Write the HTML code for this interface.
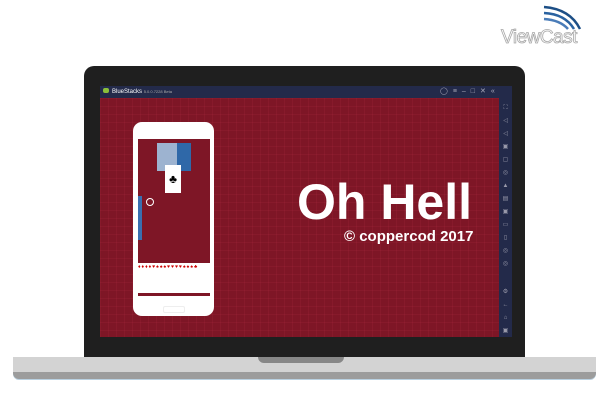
<!DOCTYPE html>
<html><head><style>
body{margin:0;width:602px;height:414px;background:#fff;position:relative;overflow:hidden;font-family:"Liberation Sans",sans-serif}
.a{position:absolute}
</style></head><body>
<svg class="a" style="left:540px;top:3px" width="45" height="28" viewBox="0 0 45 28">
<path d="M4 4 Q30 6 40 26" stroke="#1d4f86" stroke-width="2.5" fill="none"/>
<path d="M4 10 Q25 11 34 26" stroke="#2a62a0" stroke-width="2.5" fill="none"/>
<path d="M4 16 Q20 17 28 26" stroke="#4a7cb8" stroke-width="2.5" fill="none"/>
</svg>
<div class="a" style="left:501px;top:27px;font-size:19px;color:#fff;-webkit-text-stroke:0.8px #a8a8a8;letter-spacing:-0.5px">ViewCast</div>
<div class="a" style="left:84px;top:66px;width:441px;height:294px;background:#1f1f1f;border-radius:10px 10px 0 0"></div>
<div class="a" style="left:13px;top:357px;width:583px;height:22px;background:#9c9c9c;border-radius:0 0 6px 6px;box-shadow:0 1px 0 #b9d0e0"></div>
<div class="a" style="left:13px;top:357px;width:583px;height:15px;background:#d3d3d3"></div>
<div class="a" style="left:258px;top:357px;width:86px;height:6px;background:#878787;border-radius:0 0 6px 6px"></div>
<div class="a" style="left:100px;top:86px;width:412px;height:12px;background:#232a4a"></div>
<div class="a" style="left:103px;top:88px;width:6px;height:5px;background:#8bbf3a;border-radius:2px"></div>
<div class="a" style="left:112px;top:87px;font-size:6px;color:#fff;line-height:10px">BlueStacks <span style="font-size:4px;color:#aaa">5.0.0.7228 Beta</span></div>
<div class="a" style="left:440px;top:87px;font-size:7px;color:#aab;line-height:10px;letter-spacing:5px">◯≡–□✕«</div>
<div class="a" style="left:100px;top:98px;width:399px;height:239px;background:#7e1626;background-image:linear-gradient(rgba(255,80,110,.07) 1px,transparent 1px),linear-gradient(90deg,rgba(255,80,110,.07) 1px,transparent 1px);background-size:8px 8px"></div>
<div class="a" style="left:499px;top:98px;width:13px;height:239px;background:#232a4a"></div>
<div class="a" style="left:502px;top:102px;width:7px;font-size:6px;color:#99a;line-height:13px;text-align:center">⛶<br>◁<br>◁<br>▣<br>▢<br>◎<br>▲<br>▤<br>▣<br>▭<br>▯<br>◎<br>◎</div>
<div class="a" style="left:502px;top:286px;width:7px;font-size:6px;color:#99a;line-height:13px;text-align:center">⚙<br>←<br>⌂<br>▣</div>
<div class="a" style="left:133px;top:122px;width:81px;height:194px;background:#fff;border-radius:9px"></div>
<div class="a" style="left:138px;top:139px;width:72px;height:157px;background:#7e1626"></div>
<div class="a" style="left:157px;top:143px;width:34px;height:28px;background:#9db3d0"></div>
<div class="a" style="left:177px;top:143px;width:14px;height:28px;background:#2f68a8"></div>
<div class="a" style="left:165px;top:165px;width:16px;height:28px;background:#fff;font-size:12px;text-align:center;line-height:28px">♣</div>
<div class="a" style="left:138px;top:196px;width:4px;height:44px;background:#3a6fb0"></div>
<div class="a" style="left:146px;top:198px;width:6px;height:6px;border-radius:50%;border:1px solid #fff"></div>
<div class="a" style="left:138px;top:263px;width:72px;height:30px;background:#fff"></div>
<div class="a" style="left:138px;top:264px;width:72px;font-size:5px;color:#c00;letter-spacing:1px;white-space:nowrap;overflow:hidden">♦♦♦♦♥♠♠♠♥♥♥♥♠♠♠♣</div>
<div class="a" style="left:163px;top:306px;width:20px;height:5px;border:1px solid #eee;border-radius:2px"></div>
<div class="a" style="left:297px;top:175px;font-size:50px;font-weight:bold;color:#fff;line-height:54px;white-space:nowrap">Oh Hell</div>
<div class="a" style="left:344px;top:228px;font-size:15px;font-weight:bold;color:#fff;line-height:17px">© coppercod 2017</div>
</body></html>
